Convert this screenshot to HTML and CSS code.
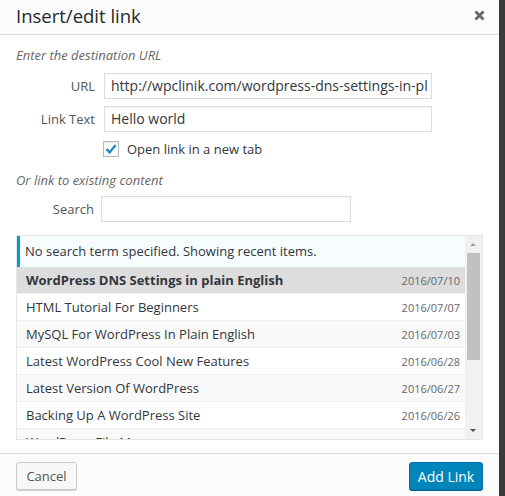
FILE: index.html
```html
<!DOCTYPE html>
<html>
<head>
<meta charset="utf-8">
<link rel="stylesheet" href="styles.css">
</head>
<body>
<div class="page">
  <div class="dialog">
    <div class="header">
      <div class="title">Insert/edit link</div>
      <div class="close"><svg width="11" height="11" viewBox="0 0 11 11"><path d="M1.5 1.5 L9.5 9.5 M9.5 1.5 L1.5 9.5" stroke="#666" stroke-width="2.8" stroke-linecap="butt"/></svg></div>
    </div>
    <div class="body">
      <div class="hint">Enter the destination URL</div>
      <div class="field">
        <label class="lbl">URL</label>
        <div class="input wide">http://wpclinik.com/wordpress-dns-settings-in-pl</div>
      </div>
      <div class="field">
        <label class="lbl">Link Text</label>
        <div class="input wide">Hello world</div>
      </div>
      <div class="check-row">
        <span class="checkbox"><svg width="14" height="14" viewBox="0 0 14 14"><path d="M2.5 7.2 L5.6 10.4 L11.6 3" fill="none" stroke="#1e8cbe" stroke-width="2.4"/></svg></span>
        <span class="check-text">Open link in a new tab</span>
      </div>
      <div class="hint hint2">Or link to existing content</div>
      <div class="field search-field">
        <label class="lbl">Search</label>
        <div class="input search"></div>
      </div>
      <div class="results">
        <div class="scroll">
          <div class="notice">No search term specified. Showing recent items.</div>
          <div class="item sel"><span class="name">WordPress DNS Settings in plain English</span><span class="date">2016/07/10</span></div>
          <div class="item"><span class="name">HTML Tutorial For Beginners</span><span class="date">2016/07/07</span></div>
          <div class="item alt"><span class="name">MySQL For WordPress In Plain English</span><span class="date">2016/07/03</span></div>
          <div class="item"><span class="name">Latest WordPress Cool New Features</span><span class="date">2016/06/28</span></div>
          <div class="item alt"><span class="name">Latest Version Of WordPress</span><span class="date">2016/06/27</span></div>
          <div class="item"><span class="name">Backing Up A WordPress Site</span><span class="date">2016/06/26</span></div>
          <div class="item alt"><span class="name">WordPress File Manager</span><span class="date">2016/06/19</span></div>
        </div>
        <div class="sbar">
          <div class="arrow up"></div>
          <div class="track"><div class="thumb"></div></div>
          <div class="arrow down"></div>
        </div>
      </div>
    </div>
    <div class="footer">
      <button class="btn cancel">Cancel</button>
      <button class="btn primary">Add Link</button>
    </div>
  </div>
  <div class="edge"></div>
</div>
</body>
</html>
```
FILE: styles.css
```css
html, body {
  margin: 0;
  padding: 0;
  height: 100%;
  background: #fff;
}
body {
  font-family: "Open Sans", "Liberation Sans", sans-serif;
  color: #32373c;
  overflow: hidden;
}
.page {
  display: flex;
  width: 505px;
  height: 496px;
}
.dialog {
  width: 499px;
  height: 496px;
  display: flex;
  flex-direction: column;
  background: #fff;
}
.edge {
  width: 6px;
  background: #3a3a3a;
}
.header {
  height: 35px;
  background: #fcfcfc;
  border-bottom: 1px solid #ddd;
  display: flex;
  align-items: center;
  justify-content: space-between;
  padding: 0 14px 0 16px;
  box-sizing: border-box;
  flex-shrink: 0;
}
.title {
  font-size: 18.5px;
  color: #23282d;
  line-height: 34px;
  margin-top: -2px;
}
.close {
  display: flex;
  margin-top: -3px;
}
.body {
  flex: 1;
  padding: 11px 16px 0 16px;
}
.hint {
  font-size: 13px;
  font-style: italic;
  color: #666;
  line-height: 18px;
  margin-bottom: 9px;
}
.hint2 {
  margin-top: 14px;
  margin-bottom: 7px;
}
.field {
  display: flex;
  align-items: center;
  margin-bottom: 7px;
}
.lbl {
  width: 79px;
  text-align: right;
  font-size: 13px;
  color: #555;
}
.search-field .lbl {
  width: 78px;
}
.input {
  height: 26px;
  border: 1px solid #ddd;
  box-sizing: border-box;
  font-size: 14px;
  line-height: 23px;
  padding: 0 6px;
  color: #32373c;
  white-space: nowrap;
  overflow: hidden;
  box-shadow: inset 0 1px 2px rgba(0,0,0,0.04);
}
.wide {
  width: 328px;
  margin-left: 9px;
}
.search {
  width: 250px;
  margin-left: 7px;
}
.check-row {
  display: flex;
  align-items: center;
  padding-left: 87px;
  height: 17px;
  margin-top: 8px;
}
.checkbox {
  width: 16px;
  height: 16px;
  border: 1px solid #b4b9be;
  box-sizing: border-box;
  display: flex;
  align-items: center;
  justify-content: center;
  background: #fff;
  box-shadow: inset 0 1px 2px rgba(0,0,0,0.1);
}
.check-text {
  font-size: 13px;
  margin-left: 8px;
  color: #32373c;
}
.results {
  margin-top: 13px;
  width: 467px;
  height: 205px;
  border: 1px solid #e5e5e5;
  box-sizing: border-box;
  display: flex;
}
.scroll {
  flex: 1;
  overflow: hidden;
}
.notice {
  background: #f7fcfe;
  border-left: 4px solid #00a0d2;
  font-size: 13px;
  line-height: 31px;
  padding-left: 5px;
  color: #32373c;
  margin-left: -1px;
}
.item {
  display: flex;
  justify-content: space-between;
  align-items: center;
  height: 27px;
  box-sizing: border-box;
  border-bottom: 1px solid #f1f1f1;
  padding: 0 5px 0 9px;
  font-size: 13px;
  background: #fff;
}
.item.alt {
  background: #f9f9f9;
}
.item.sel {
  background: #dddddd;
  font-weight: bold;
}
.name {
  color: #32373c;
}
.date {
  color: #666;
  font-weight: normal;
  font-size: 11px;
}
.sbar {
  width: 17px;
  display: flex;
  flex-direction: column;
  background: #f1f1f1;
}
.arrow {
  height: 17px;
  position: relative;
}
.arrow::after {
  content: "";
  position: absolute;
  left: 5px;
  width: 0;
  height: 0;
  border-left: 3.5px solid transparent;
  border-right: 3.5px solid transparent;
}
.arrow.up::after {
  top: 7px;
  border-bottom: 3px solid #a3a3a3;
}
.arrow.down::after {
  top: 7px;
  border-top: 3px solid #505050;
}
.track {
  flex: 1;
  padding: 0 2px;
}
.thumb {
  height: 107px;
  background: #c1c1c1;
}
.footer {
  height: 43px;
  box-sizing: border-box;
  border-top: 1px solid #ddd;
  background: #fcfcfc;
  display: flex;
  align-items: center;
  justify-content: space-between;
  padding: 0 16px;
  flex-shrink: 0;
}
.btn {
  height: 28px;
  font-family: "Open Sans", "Liberation Sans", sans-serif;
  font-size: 13px;
  border-radius: 3px;
  padding: 0;
  white-space: nowrap;
  cursor: pointer;
  margin-top: 2px;
}
.cancel {
  background: #f7f7f7;
  border: 1px solid #ccc;
  color: #555;
  box-shadow: 0 1px 0 #ccc;
  width: 61px;
}
.primary {
  background: #0085ba;
  border: 1px solid #0073aa;
  color: #fff;
  box-shadow: 0 1px 0 #006799;
  width: 74px;
  font-size: 14px;
}
```
